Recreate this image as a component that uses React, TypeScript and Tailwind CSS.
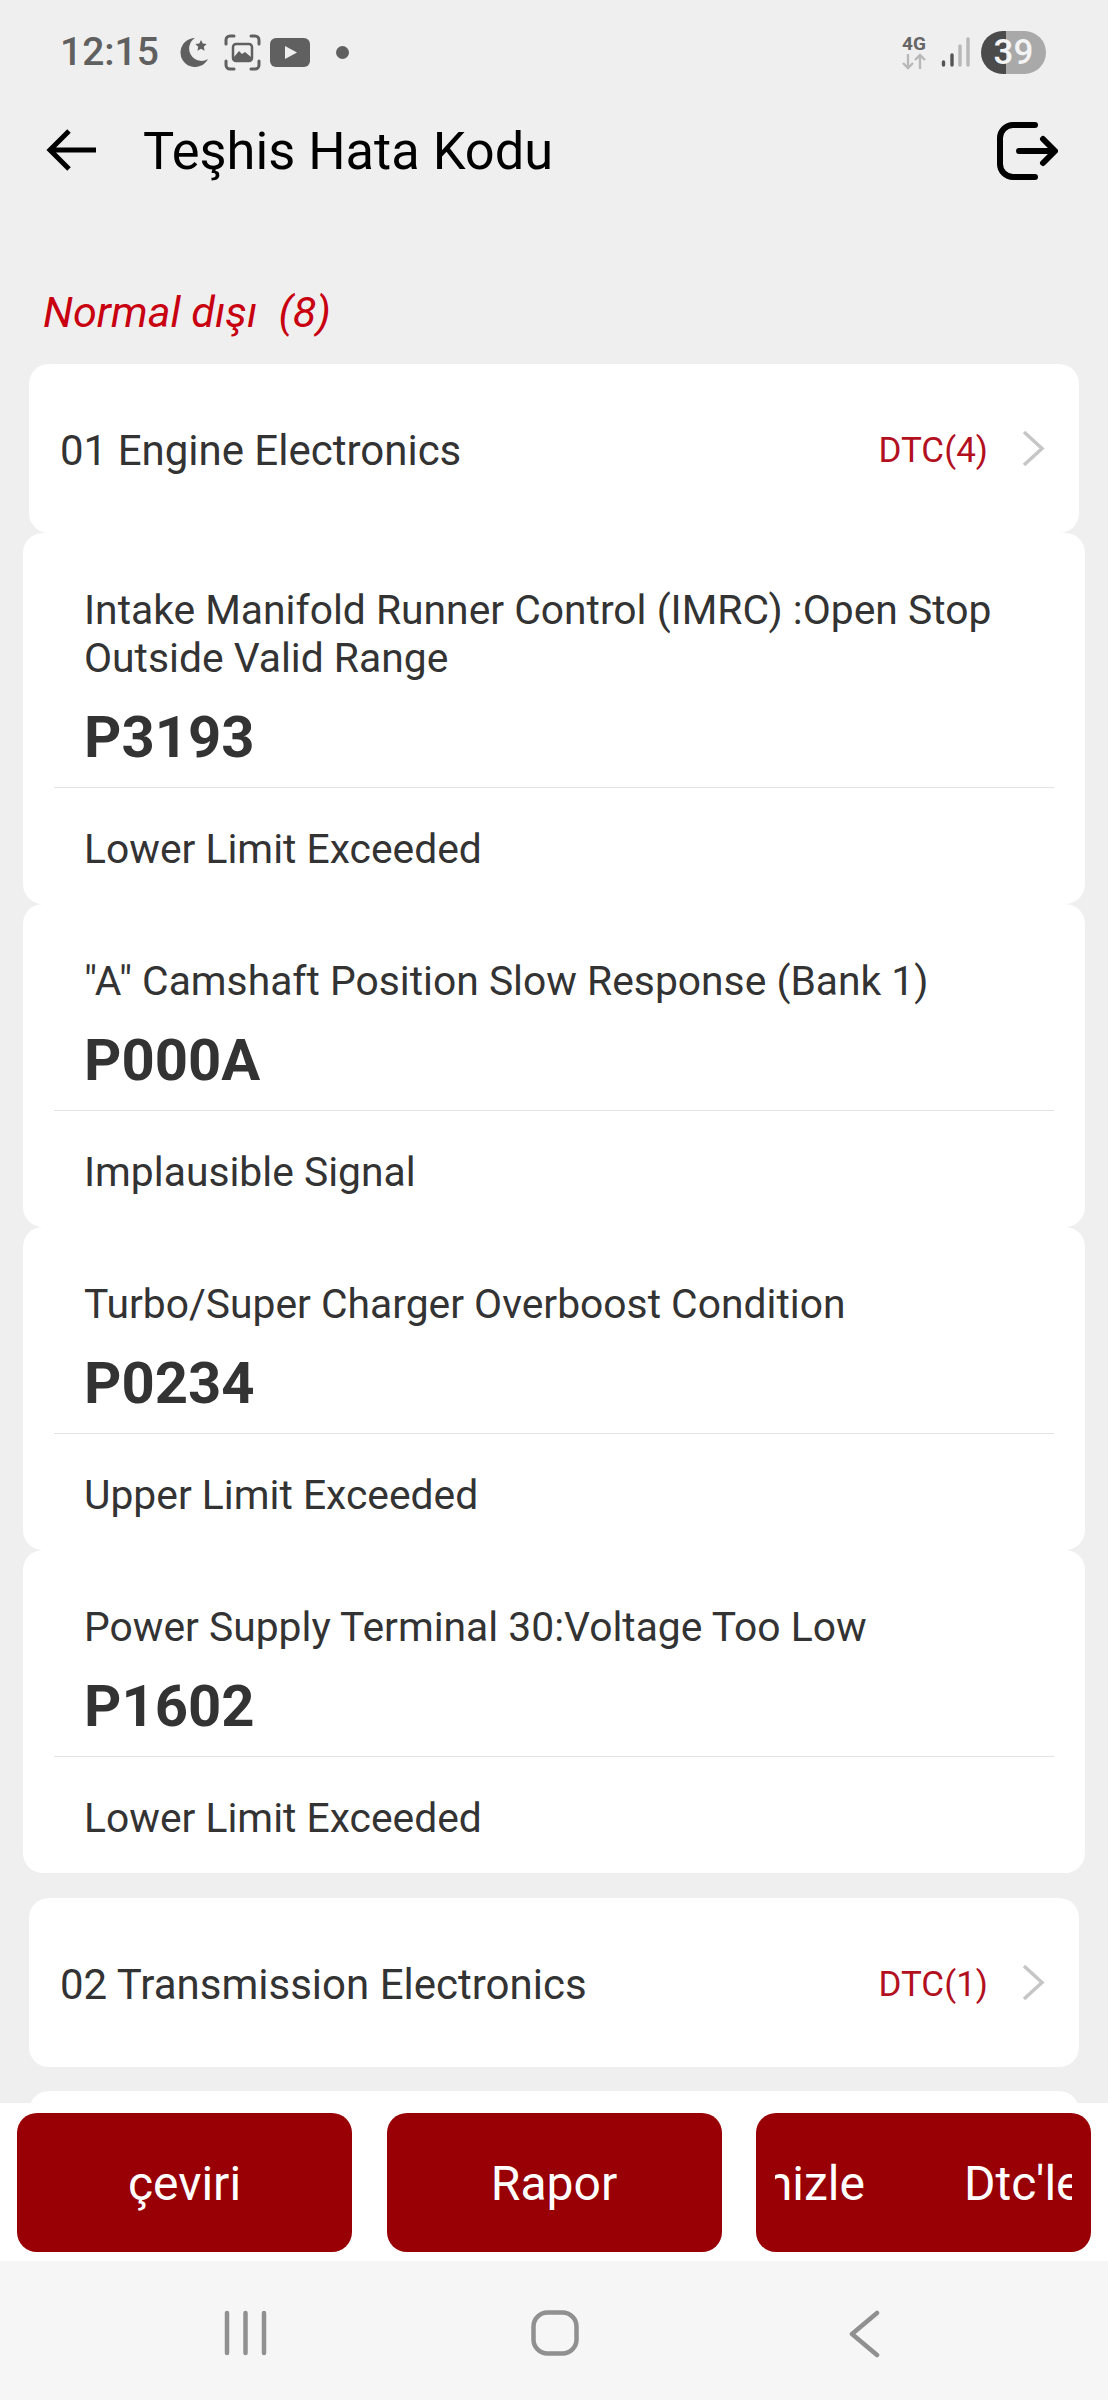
const font = { fontFamily: 'Roboto, "Noto Sans", sans-serif' };

type Fault = { title: string[]; code: string; status: string };

const engineFaults: Fault[] = [
  {
    title: ['Intake Manifold Runner Control (IMRC) :Open Stop', 'Outside Valid Range'],
    code: 'P3193',
    status: 'Lower Limit Exceeded',
  },
  { title: ['"A" Camshaft Position Slow Response (Bank 1)'], code: 'P000A', status: 'Implausible Signal' },
  { title: ['Turbo/Super Charger Overboost Condition'], code: 'P0234', status: 'Upper Limit Exceeded' },
  { title: ['Power Supply Terminal 30:Voltage Too Low'], code: 'P1602', status: 'Lower Limit Exceeded' },
];

function StatusBar() {
  return (
    <div className="flex h-[104px] shrink-0 items-center justify-between pl-[60px] pr-[62px] text-[#606060]">
      <div className="flex items-center">
        <span className="text-[39px] font-medium leading-none">12:15</span>
        {/* moon + star */}
        <svg className="ml-[21px]" width="29" height="30" viewBox="0 0 29 30" fill="#606060">
          <path d="M15 1A14.5 14.5 0 1 0 28 22 12 12 0 0 1 15 1Z" />
          <path d="M21 3l1.8 3.6 3.9.5-2.9 2.7.8 3.9-3.6-1.9-3.5 1.9.7-3.9-2.8-2.7 3.9-.5Z" />
        </svg>
        {/* screenshot */}
        <svg className="ml-[15px]" width="37" height="37" viewBox="0 0 37 37" fill="none" stroke="#606060" strokeWidth="3" strokeLinecap="round">
          <path d="M2 10V6a4 4 0 0 1 4-4h4M27 2h4a4 4 0 0 1 4 4v4M35 27v4a4 4 0 0 1-4 4h-4M10 35H6a4 4 0 0 1-4-4v-4" />
          <rect x="9" y="10" width="19" height="17" rx="3" strokeWidth="2.5" />
          <path d="M10 23l5-6 3 3 3-2 6 5v3H10Z" fill="#606060" stroke="none" />
        </svg>
        {/* youtube */}
        <svg className="ml-[9px]" width="40" height="29" viewBox="0 0 40 29">
          <rect width="40" height="29" rx="6" fill="#606060" />
          <path d="M15 8l12 6.5L15 21Z" fill="#efefef" />
        </svg>
        <span className="ml-[26px] h-[13px] w-[13px] rounded-full bg-[#606060]" />
      </div>
      <div className="flex items-center">
        <div className="flex w-[26px] flex-col items-center">
          <span className="text-[19px] font-bold leading-[18px] text-[#666666]">4G</span>
          <svg width="26" height="17" viewBox="0 0 26 17" fill="none" stroke="#b8b8b8" strokeWidth="2.4">
            <path d="M7 1v14M2 10l5 5 5-5M19 16V2M14 7l5-5 5 5" />
          </svg>
        </div>
        <svg className="ml-[14px]" width="29" height="30" viewBox="0 0 29 30" strokeLinecap="round" strokeWidth="3.4">
          <path d="M2.5 28v-3" stroke="#555555" />
          <path d="M11 28V18" stroke="#555555" />
          <path d="M19 28V9" stroke="#b8b8b8" />
          <path d="M27 28V2" stroke="#b8b8b8" />
        </svg>
        <div className="relative ml-[11px] flex h-[43px] w-[65px] overflow-hidden rounded-full">
          <div className="w-[25px] bg-[#4b4b4b]" />
          <div className="flex-1 bg-[#a9a9a9]" />
          <span className="absolute inset-0 flex items-center justify-center text-[35px] font-medium leading-none text-[#f4f4f4]">39</span>
        </div>
      </div>
    </div>
  );
}

function Header() {
  return (
    <div className="flex h-[92px] shrink-0 items-center justify-between pl-[46px] pr-[50px]">
      <div className="flex items-center">
        <svg width="50" height="44" viewBox="0 0 50 44" fill="none" stroke="#000" strokeWidth="5">
          <path d="M4 22H50M23 3L4 22l19 19" />
        </svg>
        <h1 className="ml-[47px] mt-[3px] text-[52.4px] font-normal leading-none text-black">Teşhis Hata Kodu</h1>
      </div>
      <svg className="mt-[2px]" width="61" height="58" viewBox="0 0 61 58" fill="none" stroke="#000" strokeWidth="6" strokeLinecap="round" strokeLinejoin="round">
        <path d="M38 3H16A13 13 0 0 0 3 16V42A13 13 0 0 0 16 55H38" />
        <path d="M22 29H57M46 17l12 12-12 12" />
      </svg>
    </div>
  );
}

function GroupRow({ name, count }: { name: string; count: number }) {
  return (
    <div className="mx-[29px] flex h-[169px] items-center rounded-[20px] bg-white pl-[31px] pr-[34px]">
      <span className="mt-[5px] flex-1 text-[42px] leading-none text-[#333333]">{name}</span>
      <span className="mt-[4px] text-[35px] leading-none text-[#b3101f]">DTC({count})</span>
      <svg className="ml-[34px]" width="23" height="37" viewBox="0 0 23 37" fill="none" stroke="#c6c6c6" strokeWidth="3.5">
        <path d="M2 2l18 16.500L2 35" />
      </svg>
    </div>
  );
}

function FaultCard({ fault }: { fault: Fault }) {
  return (
    <div className="mx-[23px] rounded-[20px] bg-white px-[31px] pb-[31px] pt-[53px]">
      <div className="px-[30px] text-[40.8px] leading-[48px] text-[#333333]">
        {fault.title.map((line) => (
          <div key={line} className="whitespace-nowrap">{line}</div>
        ))}
      </div>
      <div className="mt-[22px] px-[30px] text-[58px] font-bold leading-[66px] text-[#333333]">{fault.code}</div>
      <div className="mt-[17px] h-px bg-[#e3e3e3]" />
      <div className="mt-[37px] px-[30px] text-[40.8px] leading-[48px] text-[#333333]">{fault.status}</div>
    </div>
  );
}

function ActionBar() {
  const button = 'flex h-[139px] w-[335px] items-center justify-center rounded-[20px] bg-[#990006] pt-[3px] text-[48px] leading-none text-white';
  return (
    <div className="flex h-[158px] shrink-0 justify-between bg-white px-[17px] pt-[10px]">
      <div className={button}>çeviri</div>
      <div className={button}>Rapor</div>
      <div className={button}>
        {/* marquee caught mid-scroll */}
        <div className="w-[297px] overflow-hidden">
          <div className="ml-[-233px] flex gap-[99px] whitespace-nowrap">
            <span>Dtc'leri Temizle</span>
            <span>Dtc'leri Temizle</span>
          </div>
        </div>
      </div>
    </div>
  );
}

function NavBar() {
  return (
    <div className="relative flex h-[139px] shrink-0 items-start bg-[#f6f6f6] pt-[49px]">
      <svg className="ml-[224px]" width="43" height="46" viewBox="0 0 43 46" stroke="#909090" strokeWidth="4.500" strokeLinecap="round">
        <path d="M3 3v40M21.500 3v40M40 3v40" />
      </svg>
      <svg className="ml-[264px]" width="48" height="46" viewBox="0 0 48 46" fill="none" stroke="#909090" strokeWidth="4.500">
        <rect x="2.500" y="2.500" width="43" height="41" rx="14" />
      </svg>
      <svg className="ml-[270px]" width="31" height="48" viewBox="0 0 31 48" fill="none" stroke="#909090" strokeWidth="4.500" strokeLinecap="round" strokeLinejoin="round">
        <path d="M28 3L3 24l25 21" />
      </svg>
    </div>
  );
}

export default function App() {
  return (
    <div className="flex h-[2400px] w-[1108px] flex-col overflow-hidden bg-[#efefef]" style={font}>
      <StatusBar />
      <Header />
      <div className="min-h-0 flex-1 overflow-hidden">
        <div className="mb-[27px] mt-[93px] pl-[43px] text-[43.2px] italic leading-[48px] text-[#c8000f]">
          Normal dışı&nbsp;&nbsp;(8)
        </div>
        <GroupRow name="01 Engine Electronics" count={4} />
        {engineFaults.map((fault) => (
          <FaultCard key={fault.code} fault={fault} />
        ))}
        <div className="mt-[25px]">
          <GroupRow name="02 Transmission Electronics" count={1} />
        </div>
        <div className="mx-[29px] mt-[24px] h-[169px] rounded-[20px] bg-white" />
      </div>
      <ActionBar />
      <NavBar />
    </div>
  );
}
